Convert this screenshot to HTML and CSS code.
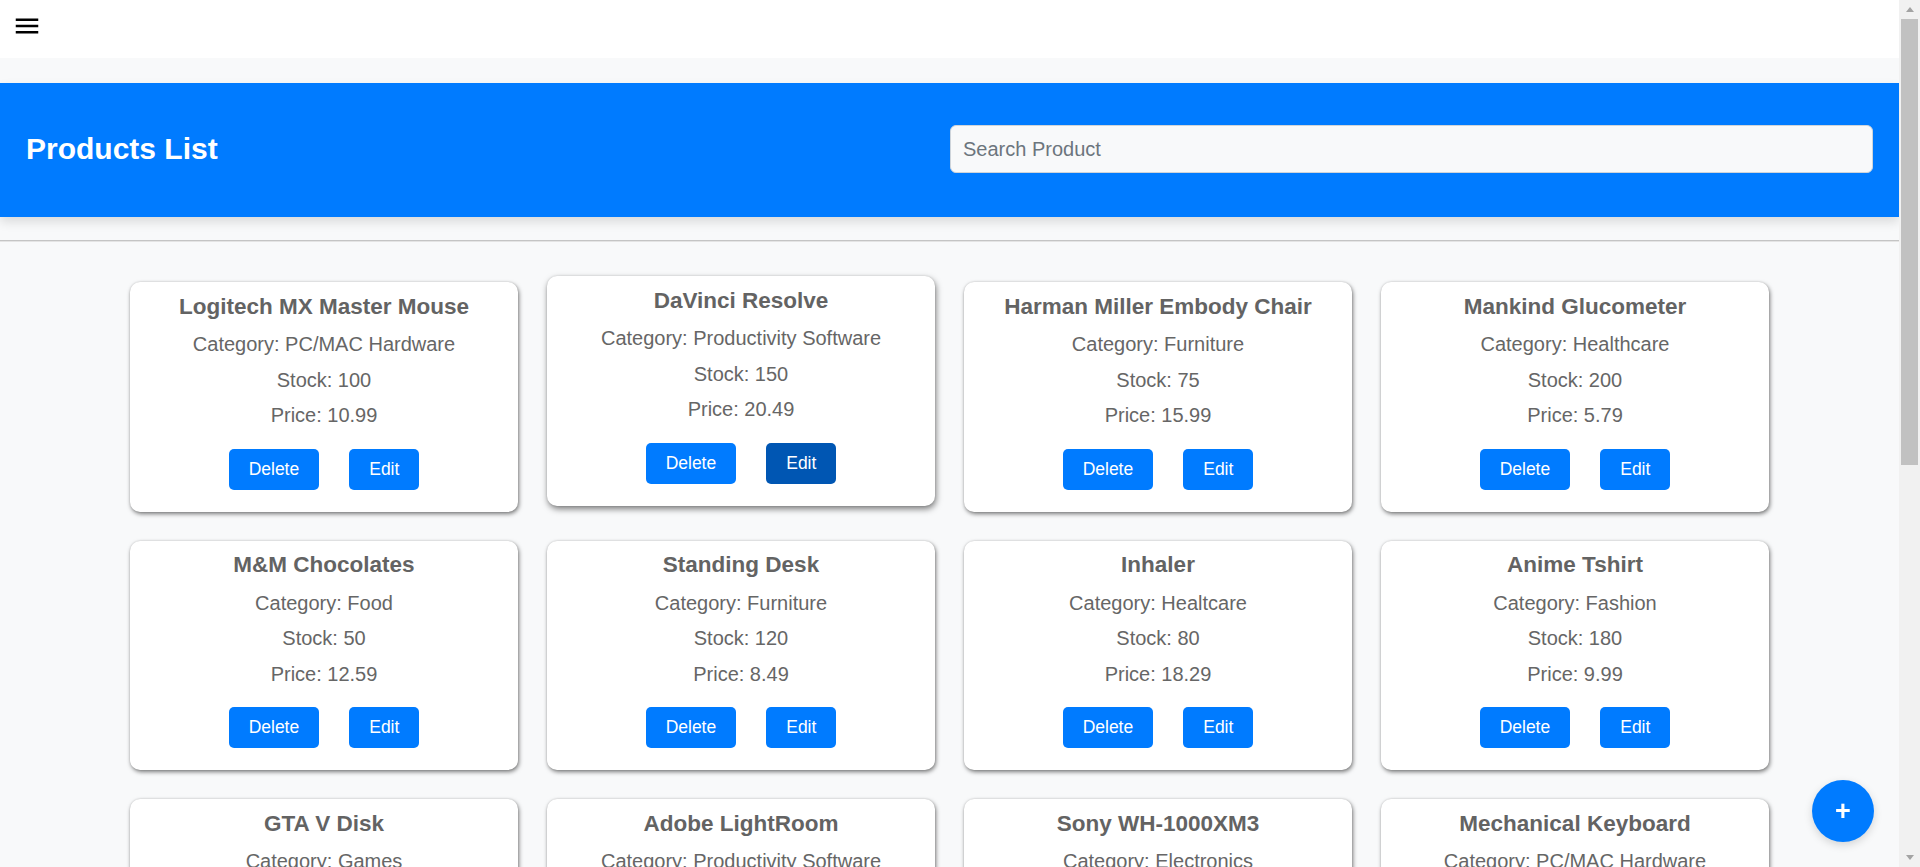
FILE: index.html
```html
<!DOCTYPE html>
<html lang="en">
<head>
<meta charset="utf-8">
<title>Products List</title>
<link rel="stylesheet" href="styles.css">
</head>
<body>
<div class="viewport">
<nav class="topbar">
  <button class="menu-btn" aria-label="Menu">
    <svg viewBox="0 0 24 24" width="30" height="30"><path d="M3 18h18v-2H3v2zm0-5h18v-2H3v2zm0-7v2h18V6H3z" fill="#000"/></svg>
  </button>
</nav>
<main class="page">
  <header class="banner">
    <h2 class="banner-title">Products List</h2>
    <div class="search-wrap"><input class="search" type="text" placeholder="Search Product"></div>
  </header>
  <hr class="divider">
  <section class="grid">
    <article class="card"><h3 class="card-title">Logitech MX Master Mouse</h3><p class="card-line">Category: PC/MAC Hardware</p><p class="card-line">Stock: 100</p><p class="card-line">Price: 10.99</p><div class="actions"><button class="btn">Delete</button><button class="btn">Edit</button></div></article>
    <article class="card card-hover"><h3 class="card-title">DaVinci Resolve</h3><p class="card-line">Category: Productivity Software</p><p class="card-line">Stock: 150</p><p class="card-line">Price: 20.49</p><div class="actions"><button class="btn">Delete</button><button class="btn btn-hover">Edit</button></div></article>
    <article class="card"><h3 class="card-title">Harman Miller Embody Chair</h3><p class="card-line">Category: Furniture</p><p class="card-line">Stock: 75</p><p class="card-line">Price: 15.99</p><div class="actions"><button class="btn">Delete</button><button class="btn">Edit</button></div></article>
    <article class="card"><h3 class="card-title">Mankind Glucometer</h3><p class="card-line">Category: Healthcare</p><p class="card-line">Stock: 200</p><p class="card-line">Price: 5.79</p><div class="actions"><button class="btn">Delete</button><button class="btn">Edit</button></div></article>
    <article class="card"><h3 class="card-title">M&amp;M Chocolates</h3><p class="card-line">Category: Food</p><p class="card-line">Stock: 50</p><p class="card-line">Price: 12.59</p><div class="actions"><button class="btn">Delete</button><button class="btn">Edit</button></div></article>
    <article class="card"><h3 class="card-title">Standing Desk</h3><p class="card-line">Category: Furniture</p><p class="card-line">Stock: 120</p><p class="card-line">Price: 8.49</p><div class="actions"><button class="btn">Delete</button><button class="btn">Edit</button></div></article>
    <article class="card"><h3 class="card-title">Inhaler</h3><p class="card-line">Category: Healtcare</p><p class="card-line">Stock: 80</p><p class="card-line">Price: 18.29</p><div class="actions"><button class="btn">Delete</button><button class="btn">Edit</button></div></article>
    <article class="card"><h3 class="card-title">Anime Tshirt</h3><p class="card-line">Category: Fashion</p><p class="card-line">Stock: 180</p><p class="card-line">Price: 9.99</p><div class="actions"><button class="btn">Delete</button><button class="btn">Edit</button></div></article>
    <article class="card"><h3 class="card-title">GTA V Disk</h3><p class="card-line">Category: Games</p><p class="card-line">Stock: 60</p><p class="card-line">Price: 29.99</p><div class="actions"><button class="btn">Delete</button><button class="btn">Edit</button></div></article>
    <article class="card"><h3 class="card-title">Adobe LightRoom</h3><p class="card-line">Category: Productivity Software</p><p class="card-line">Stock: 90</p><p class="card-line">Price: 14.99</p><div class="actions"><button class="btn">Delete</button><button class="btn">Edit</button></div></article>
    <article class="card"><h3 class="card-title">Sony WH-1000XM3</h3><p class="card-line">Category: Electronics</p><p class="card-line">Stock: 40</p><p class="card-line">Price: 24.99</p><div class="actions"><button class="btn">Delete</button><button class="btn">Edit</button></div></article>
    <article class="card"><h3 class="card-title">Mechanical Keyboard</h3><p class="card-line">Category: PC/MAC Hardware</p><p class="card-line">Stock: 110</p><p class="card-line">Price: 11.49</p><div class="actions"><button class="btn">Delete</button><button class="btn">Edit</button></div></article>
    <article class="card"><h3 class="card-title">Yoga Mat</h3><p class="card-line">Category: Fitness</p><p class="card-line">Stock: 70</p><p class="card-line">Price: 6.99</p><div class="actions"><button class="btn">Delete</button><button class="btn">Edit</button></div></article>
    <article class="card"><h3 class="card-title">Kindle Paperwhite</h3><p class="card-line">Category: Electronics</p><p class="card-line">Stock: 65</p><p class="card-line">Price: 19.99</p><div class="actions"><button class="btn">Delete</button><button class="btn">Edit</button></div></article>
    <article class="card"><h3 class="card-title">Office Chair</h3><p class="card-line">Category: Furniture</p><p class="card-line">Stock: 45</p><p class="card-line">Price: 13.29</p><div class="actions"><button class="btn">Delete</button><button class="btn">Edit</button></div></article>
    <article class="card"><h3 class="card-title">Protein Powder</h3><p class="card-line">Category: Food</p><p class="card-line">Stock: 95</p><p class="card-line">Price: 7.49</p><div class="actions"><button class="btn">Delete</button><button class="btn">Edit</button></div></article>
    <article class="card"><h3 class="card-title">Webcam HD</h3><p class="card-line">Category: PC/MAC Hardware</p><p class="card-line">Stock: 130</p><p class="card-line">Price: 9.49</p><div class="actions"><button class="btn">Delete</button><button class="btn">Edit</button></div></article>
    <article class="card"><h3 class="card-title">Minecraft</h3><p class="card-line">Category: Games</p><p class="card-line">Stock: 210</p><p class="card-line">Price: 4.99</p><div class="actions"><button class="btn">Delete</button><button class="btn">Edit</button></div></article>
    <article class="card"><h3 class="card-title">Denim Jacket</h3><p class="card-line">Category: Fashion</p><p class="card-line">Stock: 55</p><p class="card-line">Price: 16.79</p><div class="actions"><button class="btn">Delete</button><button class="btn">Edit</button></div></article>
    <article class="card"><h3 class="card-title">Thermometer</h3><p class="card-line">Category: Healthcare</p><p class="card-line">Stock: 160</p><p class="card-line">Price: 3.59</p><div class="actions"><button class="btn">Delete</button><button class="btn">Edit</button></div></article>
  </section>
</main>
</div>
<div class="scrollbar" aria-hidden="true">
  <div class="sb-btn"><span class="sb-arrow-up"></span></div>
  <div class="sb-track"><div class="sb-thumb"></div></div>
  <div class="sb-btn"><span class="sb-arrow-down"></span></div>
</div>
<button class="fab" aria-label="Add product">+</button>
</body>
</html>
```

FILE: styles.css
```css
html,
body {
  height: 100%;
  overflow: hidden;
}
body {
  margin: 0;
  background: #f8f9fa;
  font-family: "Liberation Sans", Arial, sans-serif;
  color: #666;
  display: flex;
}
.viewport {
  flex: 1;
  min-width: 0;
  height: 100vh;
  overflow-y: auto;
}
.scrollbar {
  width: 21px;
  flex: none;
  height: 100vh;
  background: #f1f1f1;
  display: flex;
  flex-direction: column;
}
.sb-btn {
  height: 19px;
  flex: none;
  display: flex;
  justify-content: center;
  align-items: center;
}
.sb-arrow-up {
  width: 0;
  height: 0;
  border-left: 4.5px solid transparent;
  border-right: 4.5px solid transparent;
  border-bottom: 5px solid #a3a3a3;
  margin-top: 0;
}
.sb-arrow-down {
  width: 0;
  height: 0;
  border-left: 4.5px solid transparent;
  border-right: 4.5px solid transparent;
  border-top: 5px solid #a3a3a3;
}
.sb-track {
  flex: 1;
  padding: 0 2px;
}
.sb-thumb {
  height: 446px;
  background: #c1c1c1;
}
.topbar {
  height: 58px;
  background: #fff;
  display: flex;
  align-items: flex-start;
  padding: 11px 0 0 12px;
  box-sizing: border-box;
}
.menu-btn {
  border: 0;
  background: none;
  padding: 0;
  width: 30px;
  height: 30px;
  display: block;
}
.menu-btn svg {
  display: block;
}
.page {
  padding-top: 25px;
}
.banner {
  height: 134px;
  background: #007bff;
  display: grid;
  grid-template-columns: 1fr 1fr;
  align-items: center;
  padding: 0 26px;
  box-shadow: 0 5px 10px rgba(0, 0, 0, 0.12);
}
.banner-title {
  margin: 0;
  color: #fff;
  font-size: 30px;
  font-weight: bold;
  line-height: 34px;
  padding-bottom: 2px;
}
.search-wrap {
  display: flex;
  padding-bottom: 2px;
}
.search {
  flex: 1;
  height: 48px;
  box-sizing: border-box;
  border: 1px solid #ced4da;
  border-radius: 6px;
  background: #f8f9fa;
  padding: 0 12.5px;
  font-family: "Liberation Sans", Arial, sans-serif;
  font-size: 20px;
  color: #495057;
  outline: none;
}
.search::placeholder {
  color: #6c757d;
}
.divider {
  margin: 23px 0 0;
  border: 0;
  border-top: 1px solid #c4c4c4;
  border-bottom: 1px solid #e4e4e4;
  height: 0;
}
.grid {
  display: grid;
  grid-template-columns: repeat(4, 388px);
  column-gap: 29px;
  row-gap: 29px;
  justify-content: center;
  padding: 40px 0 68px;
}
.card {
  background: #fff;
  border-radius: 10px;
  box-shadow: 1px 2px 4px rgba(0, 0, 0, 0.5), 0 0 2px rgba(0, 0, 0, 0.15);
  padding: 11.5px 20px 22px;
  display: flex;
  flex-direction: column;
  align-items: center;
  text-align: center;
}
.card-hover {
  transform: translateY(-6px);
  box-shadow: 1px 3px 6px rgba(0, 0, 0, 0.5), 0 0 2px rgba(0, 0, 0, 0.15);
}
.card-title {
  margin: 0 0 13.5px;
  font-size: 22.5px;
  line-height: 26px;
  font-weight: bold;
  color: #636363;
}
.card-line {
  margin: 0 0 12.5px;
  font-size: 20px;
  line-height: 23px;
  color: #666;
}
.card-line:last-of-type {
  margin-bottom: 21.5px;
}
.actions {
  display: flex;
  gap: 30px;
  justify-content: center;
}
.btn {
  background: #007bff;
  color: #fff;
  border: 0;
  border-radius: 5px;
  height: 41px;
  padding: 0 20px;
  font-family: "Liberation Sans", Arial, sans-serif;
  font-size: 17.5px;
  cursor: pointer;
}
.btn-hover {
  background: #0056b3;
}
.fab {
  position: fixed;
  right: 46px;
  bottom: 25px;
  width: 62px;
  height: 62px;
  border-radius: 50%;
  border: 0;
  background: #007bff;
  color: #fff;
  font-family: "Liberation Sans", Arial, sans-serif;
  font-size: 27px;
  font-weight: bold;
  line-height: 62px;
  padding: 0;
  box-shadow: 0 3px 8px rgba(0, 0, 0, 0.15);
}
```
